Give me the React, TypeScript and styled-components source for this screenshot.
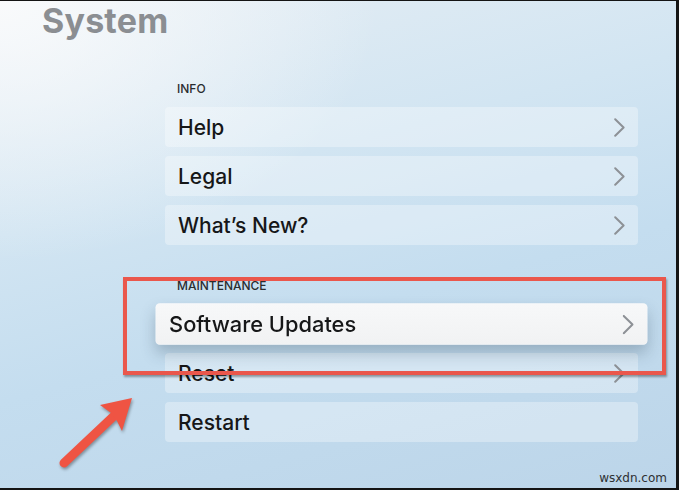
import React from 'react';
import styled, { createGlobalStyle } from 'styled-components';

const GlobalStyle = createGlobalStyle`
  html, body {
    margin: 0;
    padding: 0;
    background: #141414;
  }
  body {
    font-family: Inter, 'Noto Sans', 'Liberation Sans', sans-serif;
  }
`;

const Frame = styled.div`
  width: 679px;
  height: 490px;
  box-sizing: border-box;
  background: #141414;
  padding: 1px 3px 2px 0;
`;

const Screen = styled.div`
  position: relative;
  width: 100%;
  height: 100%;
  overflow: hidden;
  background:
    radial-gradient(ellipse 380px 260px at 0% 0%, rgba(250, 251, 252, 0.95), rgba(250, 251, 252, 0) 100%),
    linear-gradient(165deg, #e6eef4 0%, #d2e5f2 35%, #c4ddef 60%, #bcd5e9 100%);
  display: flex;
  flex-direction: column;
`;

const Title = styled.h1`
  margin: 0;
  padding-left: 42px;
  font-size: 34px;
  line-height: 40px;
  font-weight: 700;
  color: #8b8e92;
  letter-spacing: 0.2px;
`;

const List = styled.div`
  margin: 41px 0 0 165px;
  width: 473px;
  display: flex;
  flex-direction: column;
  gap: 34px;
`;

const Section = styled.section`
  display: flex;
  flex-direction: column;
`;

const SectionLabel = styled.div`
  padding-left: 12px;
  font-size: 12px;
  line-height: 14px;
  font-weight: 500;
  color: #2a2c2f;
  text-transform: uppercase;
  margin-bottom: 11px;
`;

const Rows = styled.div`
  display: flex;
  flex-direction: column;
  gap: 9px;
`;

const Row = styled.div<{ $focused?: boolean }>`
  height: 40px;
  box-sizing: border-box;
  display: flex;
  align-items: center;
  justify-content: space-between;
  padding: 0 13px 0 13px;
  border-radius: 4px;
  font-size: 21px;
  font-weight: 500;
  color: #161718;
  background: ${({ $focused }) =>
    $focused
      ? 'linear-gradient(180deg, #f7f8f9 0%, #f1f2f3 100%)'
      : 'rgba(255, 255, 255, 0.32)'};
  box-shadow: ${({ $focused }) =>
    $focused ? '0 8px 14px rgba(40, 60, 80, 0.28)' : 'none'};
  transform: ${({ $focused }) => ($focused ? 'scale(1.04)' : 'none')};
  position: relative;
  z-index: ${({ $focused }) => ($focused ? 2 : 1)};
`;

const Chevron = styled.svg`
  width: 11px;
  height: 19px;
  flex: none;
`;

const Highlight = styled.div`
  position: absolute;
  left: 123px;
  top: 276px;
  width: 543px;
  height: 98px;
  box-sizing: border-box;
  border: 4px solid #ea574c;
  box-shadow: 1px 2px 2px rgba(0, 0, 0, 0.35);
  z-index: 3;
  pointer-events: none;
`;

const Pointer = styled.svg`
  position: absolute;
  left: 50px;
  top: 385px;
  width: 95px;
  height: 90px;
  z-index: 3;
  overflow: visible;
`;

const Watermark = styled.div`
  position: absolute;
  right: 9px;
  bottom: 3px;
  font-family: 'DejaVu Sans', 'Liberation Sans', sans-serif;
  font-size: 12px;
  color: #2e3032;
`;

type Item = { label: string };

const sections: { title: string; items: Item[] }[] = [
  { title: 'Info', items: [{ label: 'Help' }, { label: 'Legal' }, { label: 'What’s New?' }] },
  {
    title: 'Maintenance',
    items: [{ label: 'Software Updates' }, { label: 'Reset' }, { label: 'Restart' }],
  },
];

const ChevronIcon: React.FC = () => (
  <Chevron viewBox="0 0 11 19">
    <polyline
      points="1.2,1.2 9.6,9.5 1.2,17.8"
      fill="none"
      stroke="#8d9196"
      strokeWidth="2"
      strokeLinecap="round"
      strokeLinejoin="round"
    />
  </Chevron>
);

const App: React.FC = () => {
  return (
    <Frame>
      <GlobalStyle />
      <Screen>
        <Title>System</Title>
        <List>
          {sections.map((section) => (
            <Section key={section.title}>
              <SectionLabel>{section.title}</SectionLabel>
              <Rows>
                {section.items.map((item) => {
                  const focused = item.label === 'Software Updates';
                  const hasChevron = item.label !== 'Restart';
                  return (
                    <Row key={item.label} $focused={focused}>
                      <span>{item.label}</span>
                      {hasChevron && <ChevronIcon />}
                    </Row>
                  );
                })}
              </Rows>
            </Section>
          ))}
        </List>

        <Highlight />

        {/* annotation arrow */}
        <Pointer viewBox="50 385 95 90">
          <g style={{ filter: 'drop-shadow(1px 2px 1.5px rgba(0,0,0,0.35))' }}>
            <line
              x1="64"
              y1="462"
              x2="116"
              y2="413"
              stroke="#ef5443"
              strokeWidth="9"
              strokeLinecap="round"
            />
            <polygon points="132,397 100,404 111,412 117,420 122,430" fill="#ef5443" />
          </g>
        </Pointer>

        <Watermark>wsxdn.com</Watermark>
      </Screen>
    </Frame>
  );
};

export default App;
